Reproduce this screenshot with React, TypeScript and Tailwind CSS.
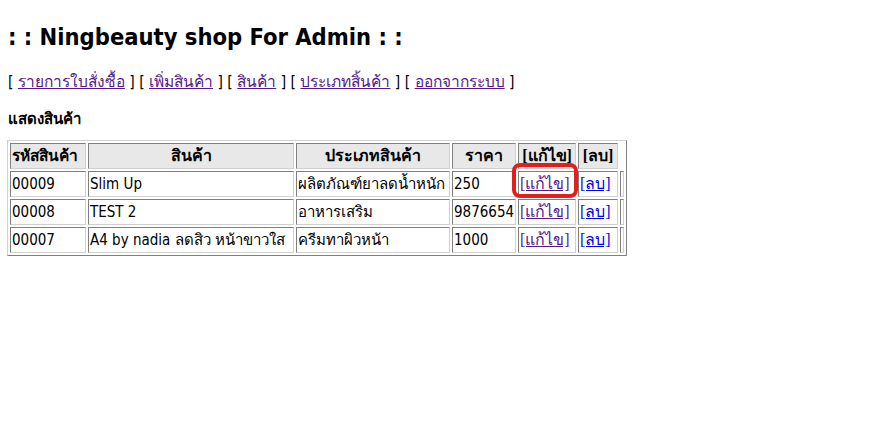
const sans = "font-['Tahoma','DejaVu_Sans_Condensed','DejaVu_Sans',sans-serif]";
const serif = "font-['Liberation_Serif',serif]";

const rows = [
  { id: '00009', name: 'Slim Up', type: 'ผลิตภัณฑ์ยาลดน้ำหนัก', price: '250' },
  { id: '00008', name: 'TEST 2', type: 'อาหารเสริม', price: '9876654' },
  { id: '00007', name: 'A4 by nadia ลดสิว หน้าขาวใส', type: 'ครีมทาผิวหน้า', price: '1000' },
];

const cell =
  'border border-t-[#808080] border-l-[#808080] border-r-[#d0d0d0] border-b-[#d0d0d0] px-px py-px';

export default function App() {
  return (
    <div className={`min-h-screen bg-white px-[7px] pt-[22px] text-black ${sans}`}>
      <h2 className="pl-px text-[23.5px] font-bold leading-[30px]">: : Ningbeauty shop For Admin : :</h2>

      <p className="mt-[20px] pl-px text-[15.5px] leading-[20px]">
        [ <a className="text-[#551a8b] underline">รายการใบสั่งซื้อ</a> ] [{' '}
        <a className="text-[#551a8b] underline">เพิ่มสินค้า</a> ] [{' '}
        <a className="text-[#551a8b] underline">สินค้า</a> ] [{' '}
        <a className="text-[#551a8b] underline">ประเภทสิ้นค้า</a> ] [{' '}
        <a className="text-[#551a8b] underline">ออกจากระบบ</a> ]
      </p>

      <p className="mt-[18px] pl-px text-[15px] font-bold leading-[18px]">แสดงสินค้า</p>

      <div className="relative mt-[12px] inline-block">
        <table className="w-[620px] table-fixed border-separate border-spacing-[2px] border border-t-[#d0d0d0] border-l-[#d0d0d0] border-r-[#808080] border-b-[#808080] text-[16px] leading-[22px]">
          <colgroup>
            <col className="w-[76px]" />
            <col className="w-[206px]" />
            <col className="w-[154px]" />
            <col className="w-[64px]" />
            <col className="w-[58px]" />
            <col className="w-[40px]" />
            <col className="w-[4px]" />
          </colgroup>
          <thead>
            <tr className="bg-[#e8e8e8] font-bold">
              <th className={`${cell} whitespace-nowrap text-left text-[15.5px]`}>รหัสสินค้า</th>
              <th className={`${cell} text-center`}>สินค้า</th>
              <th className={`${cell} text-center`}>ประเภทสินค้า</th>
              <th className={`${cell} text-center`}>ราคา</th>
              <th className={`${cell} whitespace-nowrap text-center ${serif}`}>[แก้ไข]</th>
              <th className={`${cell} whitespace-nowrap text-center ${serif}`}>[ลบ]</th>
            </tr>
          </thead>
          <tbody className="text-[15px]">
            {rows.map((r) => (
              <tr key={r.id}>
                <td className={cell}>{r.id}</td>
                <td className={`${cell} overflow-hidden whitespace-nowrap`}>{r.name}</td>
                <td className={`${cell} overflow-hidden whitespace-nowrap`}>{r.type}</td>
                <td className={`${cell} overflow-hidden whitespace-nowrap`}>{r.price}</td>
                <td className={`${cell} whitespace-nowrap text-[16px] ${serif}`}>
                  <a className="text-[#551a8b] underline">[แก้ไข]</a>
                </td>
                <td className={`${cell} whitespace-nowrap text-[16px] ${serif}`}>
                  <a className="text-[#0000ee] underline">[ลบ]</a>
                </td>
                <td className={`${cell} p-0`}></td>
              </tr>
            ))}
          </tbody>
        </table>
        <div className="pointer-events-none absolute left-[505px] top-[23px] h-[35px] w-[66px] rounded-[8px] border-[4px] border-[#e0201c]" />
      </div>
    </div>
  );
}
